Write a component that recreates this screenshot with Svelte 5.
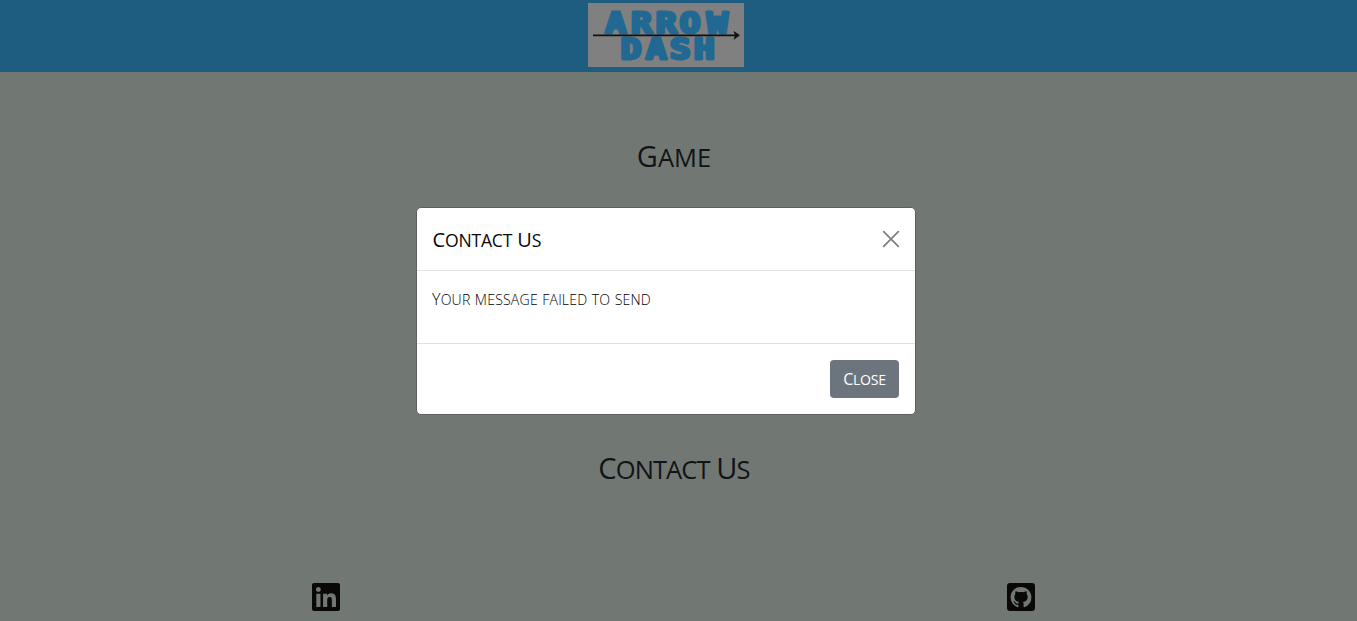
<script>
  let open = $state(true);
</script>

{#snippet caps(text)}
  {#each text.split(' ') as word, i}{#if i > 0}{' '}{/if}{#if /[A-Z]/.test(word[0])}{word[0]}<span class="small">{word.slice(1)}</span>{:else}<span class="small">{word}</span>{/if}{/each}
{/snippet}

<div class="page">
  <header>
    <svg class="logo" width="156" height="64" viewBox="0 0 156 64" role="img" aria-label="Arrow Dash">
      <rect width="156" height="64" fill="#808080" />
      <g class="wordmark" transform="scale(1.2 1)">
        <text x="14.4 35.8 56.5 76.3 98.9" y="30.4">ARROW</text>
        <text x="27.1 48.1 68.2 88.1" y="56.3">DASH</text>
      </g>
      <path d="M5 32.3H148" stroke="#111" stroke-width="1.7" />
      <path d="M146 28.5L151.5 32.3L146 36.3L147.3 32.3Z" fill="#111" stroke="#111" stroke-width=".6" />
    </svg>
  </header>

  <main>
    <h2 class="game">{@render caps('Game')}</h2>
    <h2 class="contact">{@render caps('Contact Us')}</h2>
    <footer>
      <a href="#linkedin" aria-label="LinkedIn">
        <svg width="28" height="28" viewBox="0 32 448 448" fill="#090807"><path d="M416 32H31.9C14.3 32 0 46.5 0 64.3v383.4C0 465.5 14.3 480 31.9 480H416c17.6 0 32-14.5 32-32.3V64.3c0-17.8-14.4-32.3-32-32.3zM135.4 416H69V202.2h66.5V416zm-33.2-243c-21.3 0-38.5-17.3-38.5-38.5S80.9 96 102.2 96c21.2 0 38.5 17.3 38.5 38.5 0 21.3-17.2 38.5-38.5 38.5zm282.1 243h-66.4V312c0-24.8-.5-56.7-34.5-56.7-34.6 0-39.9 27-39.9 54.9V416h-66.4V202.2h63.7v29.2h.9c8.9-16.8 30.6-34.5 62.9-34.5 67.2 0 79.7 44.3 79.7 101.9V416z" /></svg>
      </a>
      <a href="#github" aria-label="GitHub">
        <svg width="28" height="28" viewBox="0 0 28 28"><rect width="28" height="28" rx="3" fill="#090807" /><path transform="translate(3.6 3.9) scale(1.3)" fill="#717874" d="M8 0C3.58 0 0 3.58 0 8c0 3.54 2.29 6.53 5.47 7.59.4.07.55-.17.55-.38 0-.19-.01-.82-.01-1.49-2.01.37-2.53-.49-2.69-.94-.09-.23-.48-.94-.82-1.13-.28-.15-.68-.52-.01-.53.63-.01 1.08.58 1.23.82.72 1.21 1.87.87 2.33.66.07-.52.28-.87.51-1.07-1.78-.2-3.64-.89-3.64-3.95 0-.87.31-1.59.82-2.15-.08-.2-.36-1.02.08-2.12 0 0 .67-.21 2.2.82.64-.18 1.32-.27 2-.27s1.36.09 2 .27c1.53-1.04 2.2-.82 2.2-.82.44 1.1.16 1.92.08 2.12.51.56.82 1.27.82 2.15 0 3.07-1.87 3.75-3.65 3.95.29.25.54.73.54 1.48 0 1.07-.01 1.93-.01 2.2 0 .21.15.46.55.38A8.01 8.01 0 0 0 16 8c0-4.42-3.58-8-8-8z" /></svg>
      </a>
    </footer>
  </main>

  {#if open}
    <div class="modal" role="dialog" aria-modal="true">
      <div class="modal-header">
        <h5>{@render caps('Contact Us')}</h5>
        <button class="dismiss" aria-label="Close" onclick={() => (open = false)}>
          <svg width="16" height="16" viewBox="0 0 16 16"><path d="M.7 .7L15.3 15.3M15.3 .7L.7 15.3" stroke="#808080" stroke-width="1.8" stroke-linecap="round" /></svg>
        </button>
      </div>
      <div class="modal-body"><p>{@render caps('Your message failed to send')}</p></div>
      <div class="modal-footer">
        <button class="close" onclick={() => (open = false)}>{@render caps('Close')}</button>
      </div>
    </div>
  {/if}
</div>

<style>
  :global(body) { margin: 0; background: #717874; }
  * { box-sizing: border-box; }
  .page {
    position: relative;
    height: 621px;
    overflow: hidden;
    background: #717874;
    font-family: "Open Sans", "Noto Sans", sans-serif;
    color: #111416;
  }
  .small { font-size: .88em; text-transform: uppercase; }
  header {
    height: 72px;
    padding: 3px 25px 0 0;
    background: #1f5d80;
    display: flex;
    justify-content: center;
    align-items: flex-start;
  }
  .logo { display: block; }
  .wordmark {
    font: 700 29px "DejaVu Sans Mono", monospace;
    fill: #216892;
    stroke: #216892;
    stroke-width: 3;
    stroke-linejoin: round;
  }
  h2, h5, p { margin: 0; font-weight: 400; white-space: nowrap; }
  main { padding: 67px 9px 0 0; }
  h2 { height: 35px; font-size: 29px; line-height: 34px; text-align: center; }
  .game { letter-spacing: 0; }
  .contact { margin-top: 277px; letter-spacing: -.9px; }
  footer {
    display: grid;
    grid-template-columns: 1fr 1fr;
    margin: 97px -20.5px 0 -21.5px;
    justify-items: center;
  }
  footer a { display: block; height: 28px; }
  footer svg { display: block; }
  .modal {
    position: absolute;
    left: 416px;
    top: 207px;
    width: 500px;
    height: 208px;
    border: 1px solid #5b605d;
    border-radius: 5px;
    background: #fff;
    color: #111416;
  }
  .modal-header {
    height: 63px;
    padding: 0 16px 0 15.5px;
    border-bottom: 1px solid #dee2e6;
    display: flex;
    align-items: center;
    justify-content: space-between;
  }
  h5 { font-size: 20px; letter-spacing: -.2px; line-height: 30px; padding-top: 2px; color: #08090a; }
  button { border: 0; font-family: inherit; cursor: pointer; }
  .dismiss { padding: 0; background: none; display: flex; }
  .dismiss svg { overflow: visible; }
  .modal-body { height: 73px; padding: 16px 15px; border-bottom: 1px solid #dee2e6; }
  p { font-size: 16px; line-height: 24px; font-weight: 300; letter-spacing: .19px; color: #000; }
  .modal-footer { height: 70px; padding: 16px; display: flex; justify-content: flex-end; }
  .close {
    width: 69px;
    height: 38px;
    padding: 0;
    border-radius: 4px;
    background: #6c757d;
    color: #fff;
    font-size: 16px;
    letter-spacing: -.3px;
  }
</style>
